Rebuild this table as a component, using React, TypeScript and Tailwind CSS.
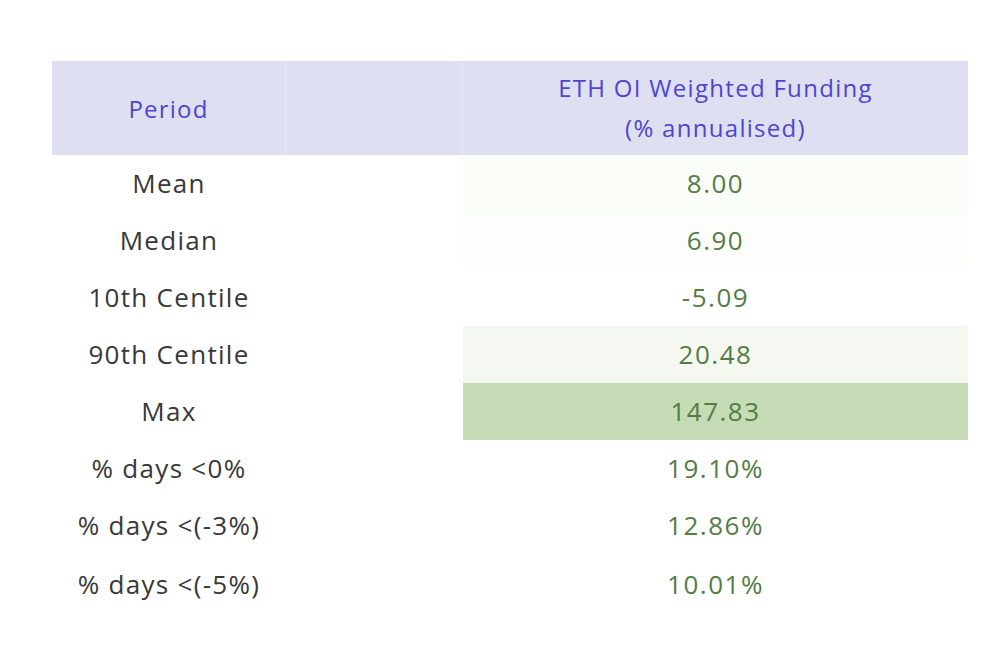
import React from "react";

const rows: { label: string; value: string; bg: string }[] = [
  { label: "Mean", value: "8.00", bg: "bg-[#fbfdf9]" },
  { label: "Median", value: "6.90", bg: "bg-[#fdfefc]" },
  { label: "10th Centile", value: "-5.09", bg: "bg-white" },
  { label: "90th Centile", value: "20.48", bg: "bg-[#f4f8f0]" },
  { label: "Max", value: "147.83", bg: "bg-[#c6dcb6]" },
  { label: "% days <0%", value: "19.10%", bg: "bg-white" },
  { label: "% days <(-3%)", value: "12.86%", bg: "bg-white" },
  { label: "% days <(-5%)", value: "10.01%", bg: "bg-white" },
];

export default function App() {
  return (
    <div
      className="w-[996px] h-[660px] bg-white pt-[61px] pl-[52px]"
      style={{ fontFamily: '"Open Sans", "Noto Sans", sans-serif' }}
    >
      <div className="w-[916px]">
        <div className="flex h-[94px] bg-[#dee0f1]">
          <div className="w-[234px] flex items-center justify-center text-[24px] tracking-[1.2px] text-[#4f44cf] border-r border-[#e8eaf6] pt-[2px]">
            Period
          </div>
          <div className="w-[177px] border-r border-[#e8eaf6]" />
          <div className="flex-1 flex flex-col items-center justify-center text-[24px] tracking-[1.3px] leading-[40px] text-[#4f44cf]">
            <span>ETH OI Weighted Funding</span>
            <span>(% annualised)</span>
          </div>
        </div>
        {rows.map((r, i) => (
          <div key={i} className={`flex ${i === rows.length - 1 ? "h-[60px]" : "h-[57px]"}`}>
            <div className="w-[234px] flex items-center justify-center text-[26px] tracking-[1.3px] text-[#383838]">
              {r.label}
            </div>
            <div className="w-[177px]" />
            <div className={`flex-1 flex items-center justify-center text-[26px] tracking-[1.5px] text-[#527d44] ${r.bg}`}>
              {r.value}
            </div>
          </div>
        ))}
      </div>
    </div>
  );
}
